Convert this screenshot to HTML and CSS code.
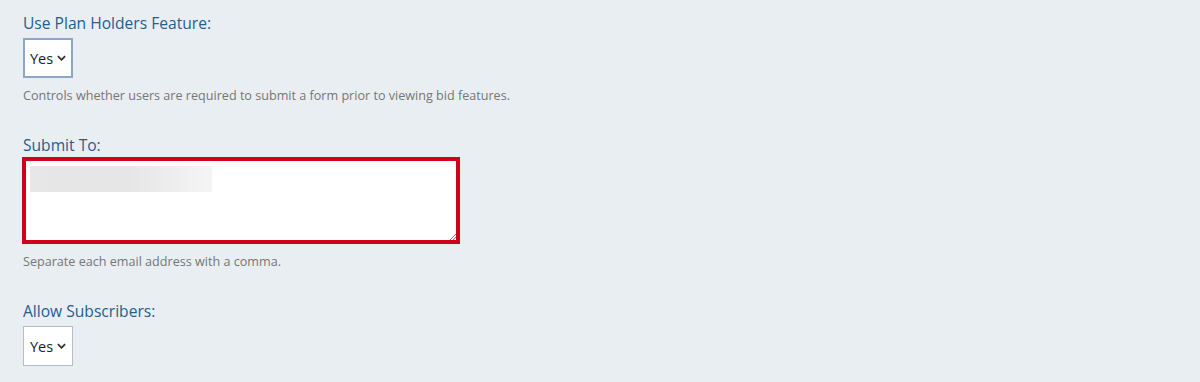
FILE: index.html
```html
<!DOCTYPE html>
<html lang="en">
<head>
<meta charset="utf-8">
<title>Plan Holders Settings</title>
<link rel="stylesheet" href="styles.css">
</head>
<body>
<form class="settings">
  <div class="field">
    <label class="label" for="ph">Use Plan Holders Feature:</label>
    <div class="select focused" id="ph"><span>Yes</span><svg class="chev" viewBox="0 0 10 6" width="9" height="6"><path d="M1 1l4 4 4-4" fill="none" stroke="#333" stroke-width="2"/></svg></div>
    <p class="help">Controls whether users are required to submit a form prior to viewing bid features.</p>
  </div>
  <div class="field">
    <label class="label" for="st">Submit To:</label>
    <div class="textarea" id="st">
      <div class="redacted"></div>
      <svg class="grip" viewBox="0 0 6 6" width="6" height="6"><path d="M6 0L0 6M6 3L3 6" stroke="#777" stroke-width="1"/></svg>
    </div>
    <p class="help">Separate each email address with a comma.</p>
  </div>
  <div class="field">
    <label class="label" for="as">Allow Subscribers:</label>
    <div class="select" id="as"><span>Yes</span><svg class="chev" viewBox="0 0 10 6" width="9" height="6"><path d="M1 1l4 4 4-4" fill="none" stroke="#333" stroke-width="2"/></svg></div>
  </div>
</form>
</body>
</html>
```
FILE: styles.css
```css
html, body {
  margin: 0;
  padding: 0;
  background: #e9eef2;
}
body {
  font-family: "Open Sans", Lato, sans-serif;
  padding: 14px 22px 0 22px;
}
.settings {
  display: flex;
  flex-direction: column;
  gap: 33px;
}
.field {
  display: flex;
  flex-direction: column;
  align-items: flex-start;
}
.label {
  display: block;
  font-size: 15.6px;
  line-height: 18px;
  color: #235f8e;
  margin: 0 0 6px 1px;
}
.select {
  box-sizing: border-box;
  width: 50px;
  height: 40px;
  flex: 0 0 40px;
  background: #fff;
  border: 1px solid #b3bdc8;
  display: flex;
  align-items: center;
  padding-left: 6px;
  gap: 4px;
  font-size: 14.5px;
  color: #222;
  margin-left: 1px;
}
.select.focused {
  border: 2px solid #8ba6c6;
  padding-left: 5px;
}
.chev {
  display: block;
}
.help {
  margin: 10px 0 0 1px;
  font-size: 12.6px;
  line-height: 15px;
  color: #767676;
}
.textarea {
  box-sizing: border-box;
  width: 438px;
  height: 87px;
  flex: 0 0 87px;
  margin-top: -3px;
  background: #fff;
  border: 4px solid #d0021b;
  position: relative;
  padding: 5px 0 0 4px;
}
.redacted {
  width: 182px;
  height: 26px;
  background: linear-gradient(90deg, #e7e7e7 0%, #e6e6e6 55%, #f5f5f5 100%);
}
.grip {
  position: absolute;
  right: 0;
  bottom: 0;
  display: block;
}
```
